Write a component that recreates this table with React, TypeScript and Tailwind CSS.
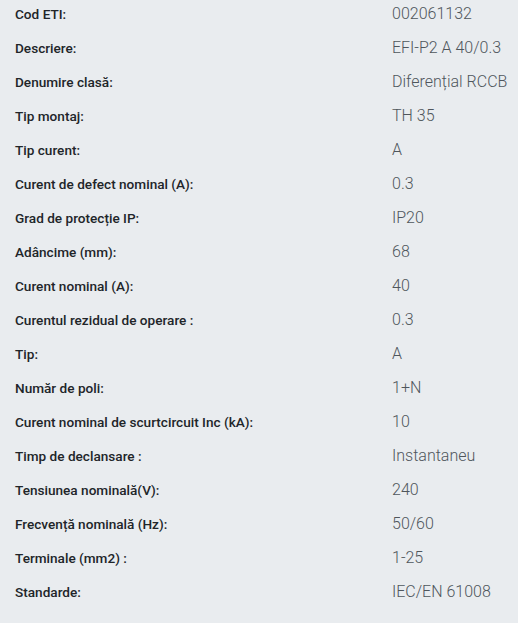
const ROWS: [string, string][] = [
  ["Cod ETI:", "002061132"],
  ["Descriere:", "EFI-P2 A 40/0.3"],
  ["Denumire clasă:", "Diferențial RCCB"],
  ["Tip montaj:", "TH 35"],
  ["Tip curent:", "A"],
  ["Curent de defect nominal (A):", "0.3"],
  ["Grad de protecție IP:", "IP20"],
  ["Adâncime (mm):", "68"],
  ["Curent nominal (A):", "40"],
  ["Curentul rezidual de operare :", "0.3"],
  ["Tip:", "A"],
  ["Număr de poli:", "1+N"],
  ["Curent nominal de scurtcircuit Inc (kA):", "10"],
  ["Timp de declansare :", "Instantaneu"],
  ["Tensiunea nominală(V):", "240"],
  ["Frecvență nominală (Hz):", "50/60"],
  ["Terminale (mm2) :", "1-25"],
  ["Standarde:", "IEC/EN 61008"],
]

export default function App() {
  return (
    <div className="min-h-screen w-full bg-[#e9ecef] pt-[2px] font-['Roboto','Liberation_Sans',sans-serif]">
      <div className="flex flex-col gap-[10px]">
        {ROWS.map(([label, value], i) => (
          <div key={i} className="grid grid-cols-[392px_1fr] leading-6">
            <div className="pl-[15px] text-[13.6px] font-medium text-[#212529]">{label}</div>
            <div className="text-[16px] font-light text-[#4f565c] whitespace-nowrap">{value}</div>
          </div>
        ))}
      </div>
    </div>
  )
}
